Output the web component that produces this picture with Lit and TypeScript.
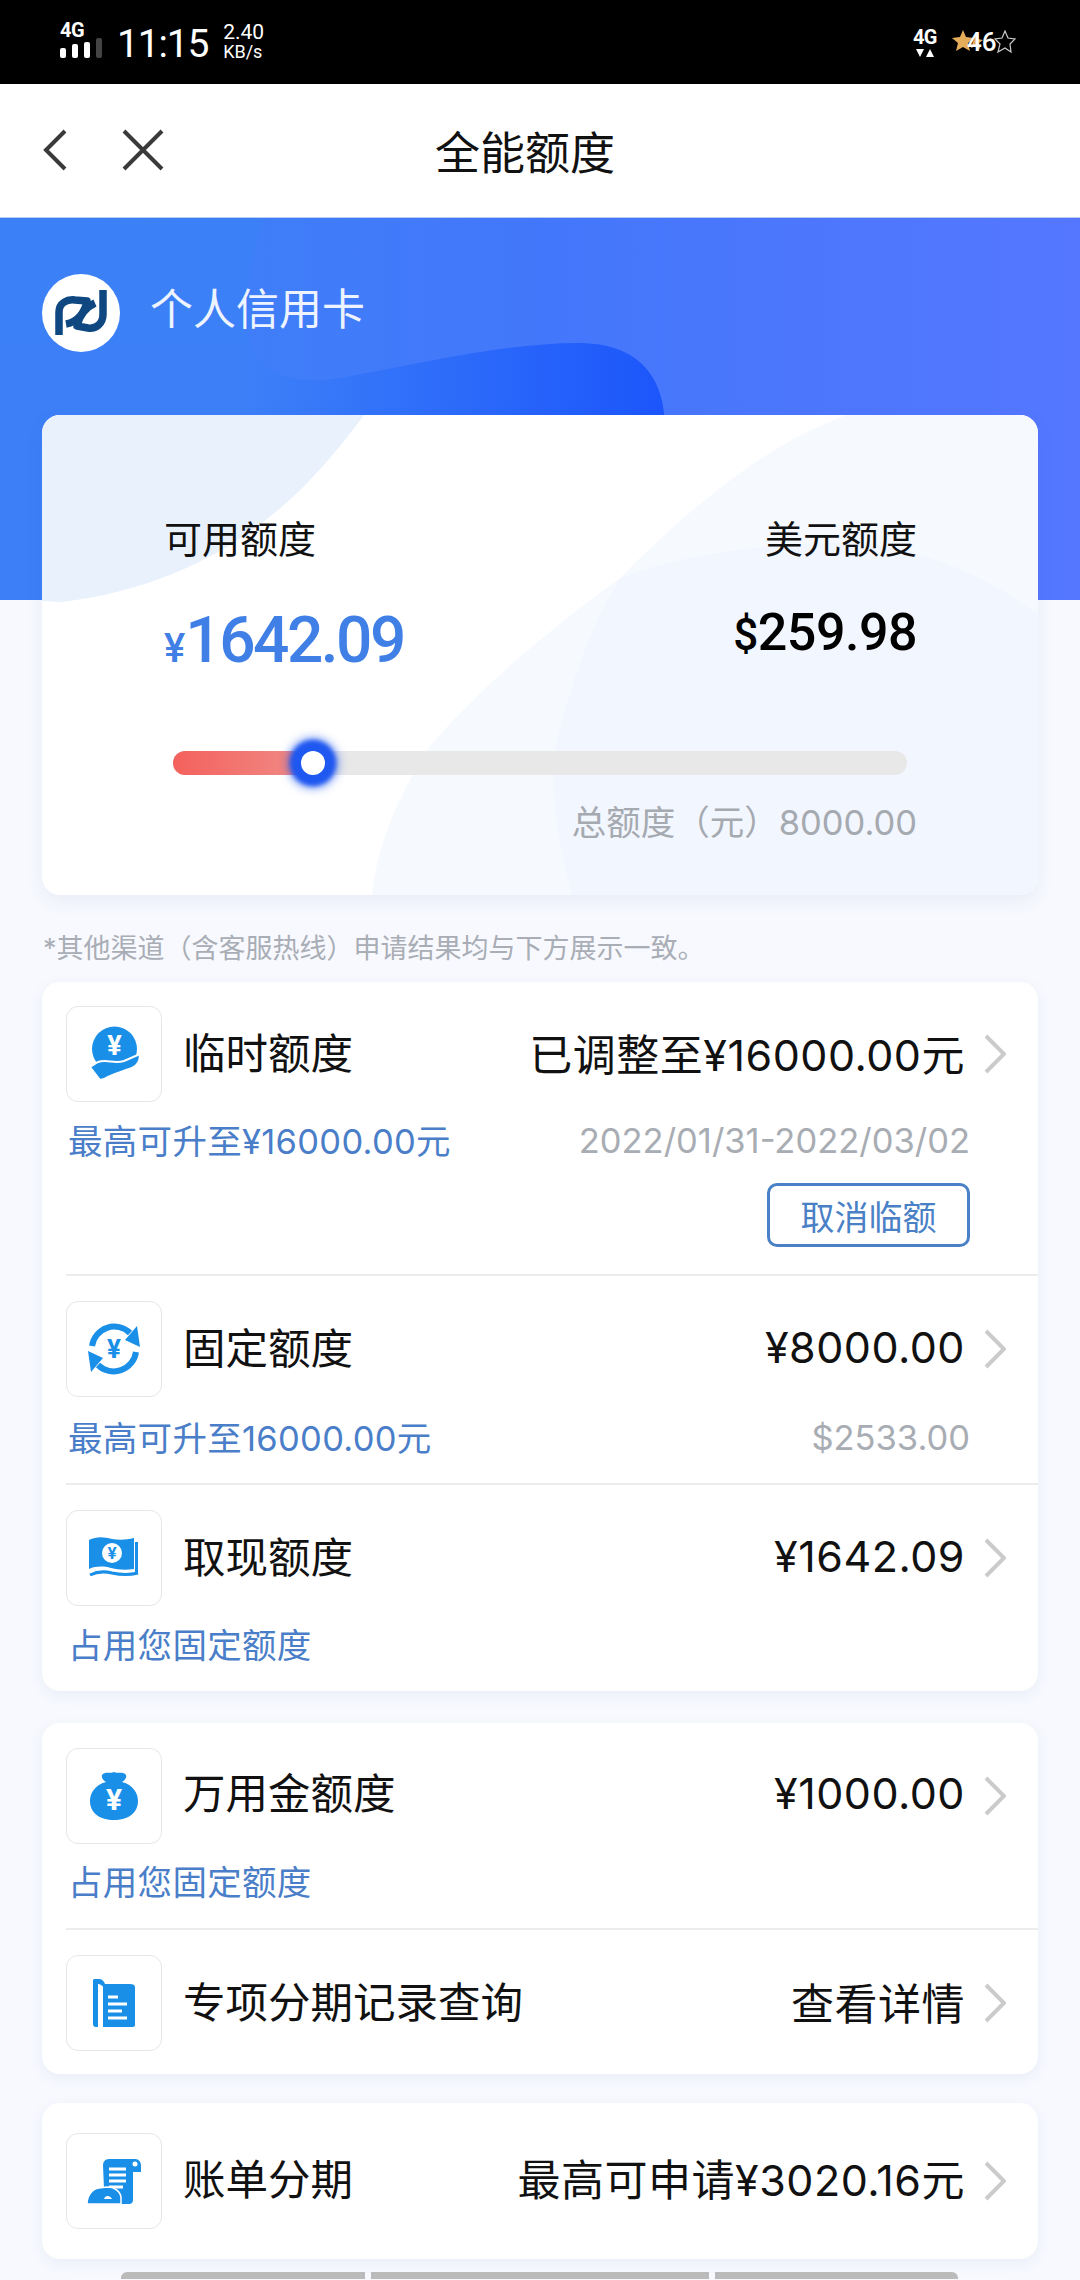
import { LitElement, html, css, svg } from "lit";
import { customElement } from "lit/decorators.js";

const BLUE = "#1a8fe8";

const yen = (x: number, y: number, size: number, fill = "#fff") =>
  svg`<text x=${x} y=${y} font-size=${size} font-weight="700" text-anchor="middle" fill=${fill} font-family="Roboto, sans-serif">¥</text>`;

const arrow = svg`<path d="M26 45A22.500 22.500 0 0 1 64 32" fill="none" stroke=${BLUE} stroke-width="6"/><path d="M59 39L71 25l3 21z" fill=${BLUE}/>`;

const icons = {
  hand: svg`<circle cx="48.500" cy="43" r="22.500" fill=${BLUE}/>
    ${yen(48.5, 49, 27)}
    <path d="M24 61l8-5c9-3 16 2 26-1l16-7c0 8-3 12-8 14-10 4-20 6-28 11l-4 1z" fill=${BLUE} stroke="#fff" stroke-width="2"/>`,
  cycle: svg`${arrow}<g transform="rotate(180 48 48)">${arrow}</g>${yen(48, 57, 26, BLUE)}`,
  note: svg`<path d="M23 30c8-4 15-3 23-1 7 1 14 1 22-1v31c-8 1-15 1-23-1-8-2-15-2-22 1z" fill=${BLUE}/>
    <path d="M70.500 32v31M24 65c8-4 14-4 22-2 9 2 18 2 26 0" fill="none" stroke=${BLUE} stroke-width="3"/>
    <circle cx="46" cy="43" r="10" fill="#fff"/>
    ${yen(46, 49, 17, BLUE)}`,
  bag: svg`<path d="M36 27c3-4 7-1 12-3 5 2 9-1 12 3 1 3-2 6-4 7 11 3 16 11 16 19 0 12-10 19-24 19s-24-7-24-19c0-8 5-16 16-19-2-1-5-4-4-7z" fill=${BLUE}/>
    ${yen(48, 62, 30)}`,
  doc: svg`<path d="M28 24h5c3 0 5 2 6 5h25c3 0 5 1 5 3v38c0 1-1 2-2 2H37V32c0-1-3-3-5-3v43h-2c-2 0-3-1-3-3V25z" fill=${BLUE}/>
    <path d="M42 42h10M42 49h19M42 56h14M42 63h19" stroke="#fff" stroke-width="3"/>`,
  scroll: svg`<path d="M37 32c0-3 2-6 6-6h26c4 0 6 3 6 7v6h-8v28c0 2-1 4-4 4H36v-3h10c3-5-1-11-8-12z" fill=${BLUE}/>
    <circle cx="69" cy="31" r="2.500" fill="#fff"/>
    <path d="M43 36h17M43 42h17M43 48h17M43 54h14" stroke="#fff" stroke-width="3"/>
    <path d="M21 71c0-8 5-15 12-16l8-1c9 0 14 6 14 11v6z" fill=${BLUE} stroke="#fff" stroke-width="1.500"/>
    <path d="M38 66c1-4 6-4 8 0z" fill="#fff"/>`,
};

type Row = {
  icon: keyof typeof icons;
  title: string;
  value: string;
  sub?: string;
  note?: string;
  button?: string;
  cls: string;
};

const cards: Row[][] = [
  [
    { icon: "hand", title: "临时额度", value: "已调整至¥16000.00元", sub: "最高可升至¥16000.00元", note: "2022/01/31-2022/03/02", button: "取消临额", cls: "r1" },
    { icon: "cycle", title: "固定额度", value: "¥8000.00", sub: "最高可升至16000.00元", note: "$2533.00", cls: "r2" },
    { icon: "note", title: "取现额度", value: "¥1642.09", sub: "占用您固定额度", cls: "r3" },
  ],
  [
    { icon: "bag", title: "万用金额度", value: "¥1000.00", sub: "占用您固定额度", cls: "r4" },
    { icon: "doc", title: "专项分期记录查询", value: "查看详情", cls: "r5" },
  ],
  [{ icon: "scroll", title: "账单分期", value: "最高可申请¥3020.16元", cls: "r6" }],
];

@customElement("app-root")
export class AppRoot extends LitElement {
  static styles = css`
    :host {
      display: block;
      width: 1080px;
      height: 2280px;
      overflow: hidden;
      background: #f7f9fe;
      font-family: Inter, "Noto Sans CJK SC", sans-serif;
      color: #111;
    }
    .status {
      height: 84px;
      background: #000;
      color: #fff;
      display: flex;
      align-items: center;
      padding: 0 64px 0 60px;
      font-family: Roboto, sans-serif;
    }
    .signal {
      display: flex;
      flex-direction: column;
      width: 46px;
      align-self: flex-start;
      margin-top: 22px;
    }
    .tiny4g {
      font: 700 20px/16px Roboto, sans-serif;
      letter-spacing: -0.5px;
    }
    .bars {
      display: flex;
      gap: 6px;
      align-items: flex-end;
      height: 20px;
    }
    .bars i {
      width: 6px;
      height: 10px;
      background: #fff;
      border-radius: 2px;
    }
    .bars i:nth-child(2) { height: 14px; }
    .bars i:nth-child(3) { height: 16px; }
    .bars i:nth-child(4) {
      height: 20px;
      background: #444;
    }
    .time {
      font-size: 39px;
      line-height: 44px;
      letter-spacing: -1.200px;
      margin-left: 11px;
      margin-top: 4px;
    }
    .speed {
      margin-left: 15px;
      font-size: 21px;
      line-height: 20px;
      display: flex;
      flex-direction: column;
    }
    .speed small {
      font-size: 18px;
    }
    .status-right {
      margin-left: auto;
      display: flex;
      align-items: center;
      gap: 15px;
    }
    .net {
      display: flex;
      flex-direction: column;
      align-items: center;
      gap: 4px;
      margin-top: 2px;
    }
    .stars {
      position: relative;
      width: 64px;
      height: 24px;
    }
    .stars svg {
      display: block;
    }
    .stars span {
      position: absolute;
      left: 15px;
      top: -1px;
      font: 500 26px/26px Roboto, sans-serif;
    }
    .nav {
      height: 133px;
      background: #fff;
      position: relative;
      display: flex;
      align-items: center;
      justify-content: center;
      box-sizing: border-box;
      padding-right: 30px;
      font-size: 45px;
      color: #111;
    }
    .nav .btns {
      position: absolute;
      left: 42px;
      top: 45px;
      display: flex;
      gap: 54px;
    }
    .nav svg {
      display: block;
    }
    .hero {
      height: 383px;
      position: relative;
      overflow: hidden;
      background: linear-gradient(90deg, #3c84f6 0%, #4377fb 50%, #5577ff 100%);
      border-top: 1px solid #b9cdf0;
      box-sizing: border-box;
    }
    .hero > svg {
      position: absolute;
      inset: 0;
    }
    .brand {
      position: relative;
      display: flex;
      align-items: center;
      gap: 30px;
      padding: 56px 0 0 42px;
      color: #eef4ff;
      font-size: 43px;
    }
    .brand span {
      margin-bottom: 14px;
    }
    .logo {
      width: 78px;
      height: 78px;
      display: block;
    }
    main {
      margin-top: -185px;
      padding: 0 42px;
      position: relative;
      display: flex;
      flex-direction: column;
    }
    .summary {
      height: 480px;
      border-radius: 18px;
      background: #fff;
      position: relative;
      overflow: hidden;
      box-shadow: 0 6px 18px rgba(60, 90, 160, 0.08);
    }
    .summary > svg {
      position: absolute;
      inset: 0;
    }
    .sum-body {
      position: relative;
      display: flex;
      flex-direction: column;
      padding: 98px 121px 0 122px;
    }
    .amounts {
      display: flex;
      justify-content: space-between;
      height: 160px;
    }
    .amt-col {
      display: flex;
      flex-direction: column;
    }
    .amt-col.right {
      align-items: flex-end;
    }
    .lbl {
      font-size: 38px;
      line-height: 52px;
    }
    .big {
      font: 500 64px/76px Roboto, sans-serif;
      margin-top: 38px;
      color: #3f7fe6;
      letter-spacing: -2.500px;
    }
    .big small {
      font-size: 40px;
      letter-spacing: 0;
    }
    .usd {
      font: 500 52px/60px Roboto, sans-serif;
      margin-top: 38px;
      color: #000;
      letter-spacing: -0.5px;
    }
    .usd small {
      font-size: 44px;
    }
    .track {
      margin: 78px 10px 0 9px;
      height: 24px;
      border-radius: 12px;
      background: #e8e8e8;
      position: relative;
    }
    .fill {
      height: 100%;
      border-radius: 12px 0 0 12px;
      background: linear-gradient(90deg, #f4615c, #f08a86);
    }
    .knob {
      position: absolute;
      top: 12px;
      width: 24px;
      height: 24px;
      margin: -12px 0 0 -12px;
      border-radius: 50%;
      background: #fff;
      box-shadow: 0 0 4px 11px #1f58f0, 0 0 8px 14px rgba(31, 88, 240, 0.5);
    }
    .total {
      align-self: flex-end;
      margin-top: 26px;
      font-size: 34.500px;
      line-height: 44px;
      color: #a5a9b0;
    }
    .disclaimer {
      margin: 36px 0 15px;
      height: 36px;
      padding-left: 1px;
      font-size: 27px;
      line-height: 36px;
      color: #a9adb5;
      white-space: nowrap;
    }
    .card {
      background: #fff;
      border-radius: 18px;
      box-shadow: 0 4px 14px rgba(60, 90, 160, 0.07);
      margin-bottom: 32px;
    }
    .card:nth-of-type(3) {
      margin-bottom: 29px;
    }
    .row {
      margin-left: 24px;
      padding-right: 32px;
      border-bottom: 2px solid #ececec;
      box-sizing: border-box;
    }
    .row:last-child {
      border-bottom: 0;
    }
    .line {
      display: flex;
      align-items: center;
      height: 96px;
    }
    .box {
      width: 96px;
      height: 96px;
      flex: none;
      box-sizing: border-box;
      border: 1px solid #e6e6e6;
      border-radius: 12px;
      background: #fff;
    }
    .box svg {
      display: block;
      margin: -1px;
    }
    .title {
      font-size: 42.500px;
      margin: 0 0 7px 21px;
      white-space: nowrap;
    }
    .value {
      margin: 0 0 4px auto;
      font-size: 43px;
      letter-spacing: 0.500px;
      white-space: nowrap;
    }
    .chev {
      margin-left: 19px;
      flex: none;
      display: block;
    }
    .subline {
      display: flex;
      align-items: center;
      justify-content: space-between;
      height: 40px;
      padding-right: 36px;
    }
    .sub {
      font-size: 34.500px;
      color: #4a7ec8;
      padding-left: 2px;
      margin-bottom: 3px;
      letter-spacing: 0.300px;
      white-space: nowrap;
    }
    .note {
      font-size: 34.500px;
      color: #a8acb3;
      white-space: nowrap;
    }
    .btn {
      display: flex;
      width: 203px;
      height: 64px;
      box-sizing: border-box;
      margin: 23px 36px 0 auto;
      border: 3px solid #4a80c6;
      border-radius: 10px;
      align-items: center;
      justify-content: center;
      font-size: 34px;
      color: #4a80c6;
    }
    .r1 { padding-top: 24px; padding-bottom: 27px; }
    .r1 .subline { margin-top: 18px; }
    .r2 { padding-top: 25px; padding-bottom: 26px; }
    .r2 .subline { margin-top: 20px; }
    .r3 { padding-top: 25px; padding-bottom: 27px; }
    .r3 .subline { margin-top: 18px; }
    .r4 { padding-top: 25px; padding-bottom: 27px; }
    .r4 .subline { margin-top: 17px; }
    .r4 .title { margin-bottom: 11px; }
    .r4 .value { margin-bottom: 7px; }
    .r5 { padding-top: 25px; padding-bottom: 23px; }
    .r6 { padding-top: 30px; padding-bottom: 30px; }
    .r6 .title { margin-bottom: 10px; }
    .r6 .value { margin-bottom: 8px; }
    .peek {
      display: flex;
      gap: 6px;
      margin: -19px 80px 0 79px;
      height: 7px;
    }
    .peek i {
      background: #bbb;
    }
    .peek i:nth-child(1) { width: 244px; border-radius: 6px 0 0 0; }
    .peek i:nth-child(2) { width: 338px; }
    .peek i:nth-child(3) { width: 243px; border-radius: 0 6px 0 0; }
  `;

  private row(r: Row) {
    return html`<div class="row ${r.cls}">
      <div class="line">
        <div class="box"><svg width="96" height="96" viewBox="0 0 96 96">${icons[r.icon]}</svg></div>
        <span class="title">${r.title}</span>
        <span class="value">${r.value}</span>
        <svg class="chev" width="22" height="40" viewBox="0 0 22 40"><path d="M2 2l18 18-18 18" fill="none" stroke="#cbcbcb" stroke-width="4"/></svg>
      </div>
      ${r.sub
        ? html`<div class="subline"><span class="sub">${r.sub}</span>${r.note ? html`<span class="note">${r.note}</span>` : ""}</div>`
        : ""}
      ${r.button ? html`<div class="btn">${r.button}</div>` : ""}
    </div>`;
  }

  render() {
    return html`
      <div class="status">
        <div class="signal">
          <span class="tiny4g">4G</span>
          <div class="bars"><i></i><i></i><i></i><i></i></div>
        </div>
        <span class="time">11:15</span>
        <div class="speed"><span>2.40</span><small>KB/s</small></div>
        <div class="status-right">
          <div class="net">
            <span class="tiny4g">4G</span>
            <svg width="18" height="8" viewBox="0 0 18 8"><path d="M0 0h8L4 8zM10 8l4-8 4 8z" fill="#fff"/></svg>
          </div>
          <div class="stars">
            <svg width="64" height="24" viewBox="0 0 64 24">
              <path d="M11 0l3 7 8 1-6 5 2 8-7-4-7 4 2-8-6-5 8-1z" fill="#e5ac5a"/>
              <path d="M24 5l2 4 5 1-4 3 1 6-4-3-5 2 2-6z" fill="#e5ac5a"/>
              <path d="M53 1l3 7 7 1-5 5 1 8-6-4-7 4 2-8-5-5 7-1z" fill="none" stroke="#ccc" stroke-width="1.200"/>
            </svg>
            <span>46</span>
          </div>
        </div>
      </div>
      <div class="nav">
        <div class="btns">
          <svg width="26" height="42" viewBox="0 0 26 42"><path d="M23 2L4 21l19 19" fill="none" stroke="#3a3a3a" stroke-width="4"/></svg>
          <svg width="42" height="42" viewBox="0 0 42 42"><path d="M2 2l38 38M40 2L2 40" fill="none" stroke="#3a3a3a" stroke-width="4"/></svg>
        </div>
        全能额度
      </div>
      <div class="hero">
        <svg width="1080" height="383" viewBox="0 0 1080 383">
          <defs>
            <linearGradient id="dk" gradientUnits="userSpaceOnUse" x1="250" x2="665" y1="0" y2="0">
              <stop offset="0" stop-color="#3d7ff8"/>
              <stop offset="1" stop-color="#1c56fb"/>
            </linearGradient>
          </defs>
          <path d="M265 0C248 50 242 90 250 125 258 155 290 168 340 160V383H0V0z" fill="#3b82f6" opacity="0.55"/>
          <path d="M250 125C258 155 290 168 340 160 400 150 500 125 578 125 640 125 665 160 665 210V383H0V125z" fill="url(#dk)"/>
          <path d="M0 0H265C248 50 242 90 250 125V383H0z" fill="#3c80f6" opacity="0.8"/>
        </svg>
        <div class="brand">
          <svg class="logo" viewBox="0 0 78 78">
            <circle cx="39" cy="39" r="39" fill="#fff"/>
            <g fill="none" stroke="#0f4880" stroke-width="7.500" stroke-linejoin="round">
              <path d="M17 61V38C17 29 25 25 33 26L45 27C43 38 36 48 24 50"/>
              <path d="M61 16V40C61 50 54 55 46 54L35 52C37 42 44 33 53 29"/>
            </g>
          </svg>
          <span>个人信用卡</span>
        </div>
      </div>
      <main>
        <section class="summary">
          <svg width="996" height="480" viewBox="0 0 996 480">
            <path d="M0 0H322C270 70 190 165 20 187L0 186z" fill="#e9f1fd"/>
            <path d="M805 0C720 30 640 100 578 163 500 220 430 280 385 335 355 385 335 430 330 480H996V0z" fill="#f6f9fe"/>
            <path d="M578 163C640 140 720 128 805 128 880 130 950 165 996 199V480H530C515 420 505 370 516 324 530 260 555 200 578 163z" fill="#f2f6fe"/>
          </svg>
          <div class="sum-body">
            <div class="amounts">
              <div class="amt-col">
                <span class="lbl">可用额度</span>
                <span class="big"><small>¥</small>1642.09</span>
              </div>
              <div class="amt-col right">
                <span class="lbl">美元额度</span>
                <span class="usd"><small>$</small>259.98</span>
              </div>
            </div>
            <div class="track">
              <div class="fill" style="width: ${(130 / 734) * 100}%"></div>
              <div class="knob" style="left: ${(140 / 734) * 100}%"></div>
            </div>
            <span class="total">总额度（元）8000.00</span>
          </div>
        </section>
        <div class="disclaimer">*其他渠道（含客服热线）申请结果均与下方展示一致。</div>
        ${cards.map((c) => html`<section class="card">${c.map((r) => this.row(r))}</section>`)}
        <div class="peek"><i></i><i></i><i></i></div>
      </main>
    `;
  }
}
